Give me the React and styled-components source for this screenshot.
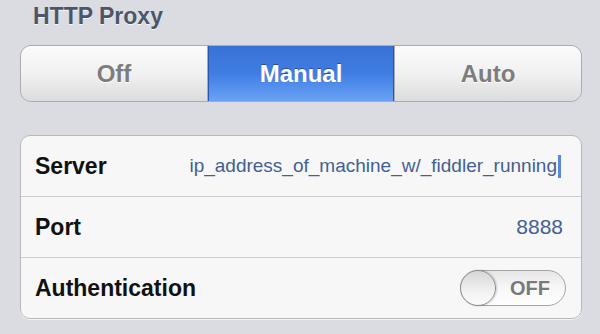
import React from 'react'
import styled, { createGlobalStyle } from 'styled-components'

const GlobalStyle = createGlobalStyle`
  html, body {
    margin: 0;
    padding: 0;
    background: #dadce1;
    font-family: 'Liberation Sans', Arial, sans-serif;
  }
`

const segments = ['Off', 'Manual', 'Auto']

export default function App() {
  return (
    <Page>
      <GlobalStyle />
      <SectionTitle>HTTP Proxy</SectionTitle>
      <Segmented>
        {segments.map(s => (
          <Segment key={s} active={s === 'Manual'}>
            {s}
          </Segment>
        ))}
      </Segmented>
      <Group>
        <Row>
          <Label>Server</Label>
          <Value>
            ip_address_of_machine_w/_fiddler_running
            <Caret />
          </Value>
        </Row>
        <Row>
          <Label>Port</Label>
          <Value numeric>8888</Value>
        </Row>
        <Row>
          <Label>Authentication</Label>
          <Toggle>
            <Knob />
            <ToggleText>OFF</ToggleText>
          </Toggle>
        </Row>
      </Group>
    </Page>
  )
}

const Page = styled.div`
  width: 600px;
  height: 334px;
  padding: 0 18px 0 20px;
  box-sizing: border-box;
  overflow: hidden;
`

const SectionTitle = styled.div`
  height: 45px;
  padding: 3px 0 0 13px;
  box-sizing: border-box;
  font-size: 23px;
  line-height: 27px;
  font-weight: bold;
  color: #4c566b;
  text-shadow: 0 1px 0 rgba(255, 255, 255, 0.8);
`

const Segmented = styled.div`
  display: flex;
  height: 57px;
  border: 1px solid #a9abaf;
  border-radius: 11px;
  overflow: hidden;
  box-sizing: border-box;
`

const Segment = styled.div`
  flex: 1;
  display: flex;
  align-items: center;
  justify-content: center;
  font-size: 24px;
  font-weight: bold;
  color: ${p => (p.active ? '#fff' : '#7d7d7d')};
  text-shadow: ${p =>
    p.active ? '0 -1px 0 rgba(0, 0, 0, 0.35)' : '0 1px 0 #fff'};
  background: ${p =>
    p.active
      ? 'linear-gradient(#3a72d6, #3f7de2 50%, #6aa3f5)'
      : 'linear-gradient(#fbfbfb, #f1f1f1 50%, #dcdcdc)'};
  box-shadow: ${p =>
    p.active ? 'inset 1px 0 0 #2a56a8, inset -1px 0 0 #2a56a8' : 'none'};

  & + & {
    border-left: 1px solid #a9abaf;
  }
`

const Group = styled.div`
  margin-top: 33px;
  background: #f7f7f7;
  border: 1px solid #b6b8bc;
  border-radius: 10px;
  box-shadow: 0 1px 0 rgba(255, 255, 255, 0.7);
  overflow: hidden;
`

const Row = styled.div`
  display: flex;
  align-items: center;
  justify-content: space-between;
  height: 60px;
  padding: 0 15px 0 14px;

  & + & {
    border-top: 1px solid #cdcdcf;
  }
`

const Label = styled.div`
  font-size: 23px;
  font-weight: bold;
  color: #111;
`

const Value = styled.div`
  display: flex;
  align-items: center;
  font-size: ${p => (p.numeric ? '21px' : '19px')};
  color: #445f91;
  padding-right: ${p => (p.numeric ? '3px' : '5px')};
`

const Caret = styled.span`
  display: inline-block;
  width: 3px;
  height: 23px;
  margin-left: 1px;
  background: #5a86e6;
`

const Toggle = styled.div`
  position: relative;
  width: 106px;
  height: 36px;
  box-sizing: border-box;
  border: 1px solid #a4a4a4;
  border-radius: 18px;
  background: linear-gradient(#e6e6e6, #f6f6f6 45%, #ffffff);
  display: flex;
  align-items: center;
  justify-content: flex-end;
  padding-right: 15px;
`

const Knob = styled.div`
  position: absolute;
  left: -1px;
  top: -1px;
  width: 36px;
  height: 36px;
  box-sizing: border-box;
  border-radius: 50%;
  border: 1px solid #8f8f8f;
  background: linear-gradient(#d6d6d6, #f2f2f2 60%, #fbfbfb);
  box-shadow: 1px 0 2px rgba(0, 0, 0, 0.2);
`

const ToggleText = styled.span`
  font-size: 20px;
  font-weight: bold;
  color: #7a7a7a;
  text-shadow: 0 1px 0 #fff;
`
